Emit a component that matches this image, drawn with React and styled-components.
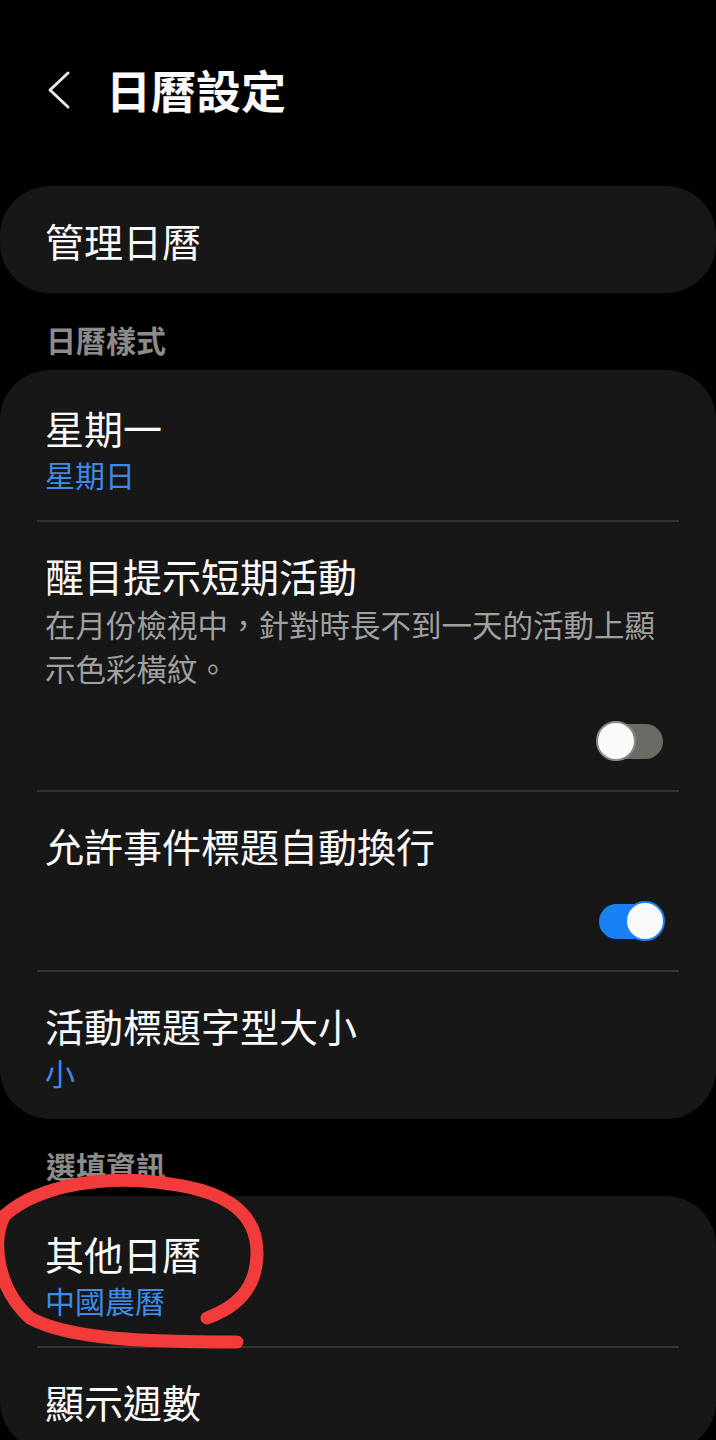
import React from 'react';
import styled, { createGlobalStyle } from 'styled-components';

const GlobalStyle = createGlobalStyle`
    body {
        margin: 0;
        background: #000;
        font-family: "Noto Sans CJK TC", "Noto Sans", sans-serif;
    }
`;

const Page = styled.div`
    position: relative;
    width: 716px;
    min-height: 1440px;
    padding-top: 60px;
    box-sizing: border-box;
    background: #000;
    color: #fafafa;
`;

const Header = styled.div`
    display: flex;
    align-items: center;
    height: 60px;
    margin-bottom: 66px;
    padding-left: 46px;
`;

const BackIcon = styled.svg`
    width: 26px;
    height: 40px;
    flex: none;
`;

const Title = styled.h1`
    margin: 0 0 0 34px;
    font-size: 45px;
    font-weight: 700;
    line-height: 60px;
    color: #fafafa;
`;

const Card = styled.div`
    background: #171717;
    border-radius: 50px;
    padding: 4px 0 1px;
`;

const SingleRow = styled.div`
    height: 107px;
    margin-top: -4px;
    margin-bottom: -1px;
    display: flex;
    align-items: center;
    padding: 0 51px 0 45px;
    font-size: 39px;
    line-height: 50px;
`;

const SectionLabel = styled.div`
    margin: 26px 0 11px;
    padding-left: 46px;
    font-size: 30px;
    font-weight: 700;
    line-height: 40px;
    color: #8b8b8b;
`;

const Item = styled.div`
    display: flex;
    flex-direction: column;
    padding: 28px 51px 24px 45px;
`;

const ItemTitle = styled.div`
    font-size: 39px;
    line-height: 50px;
    color: #fafafa;
`;

const ItemValue = styled.div`
    font-size: 30px;
    line-height: 44px;
    color: #3d8be8;
`;

const ItemDesc = styled.div`
    margin-top: 2px;
    font-size: 30.5px;
    line-height: 44px;
    color: #a0a0a0;
`;

const Divider = styled.div`
    height: 2px;
    margin: 0 37px;
    background: #333333;
`;

const ToggleRow = styled.div`
    display: flex;
    justify-content: flex-end;
    margin: 31px 0 5px;
`;

const ToggleBox = styled.div`
    position: relative;
    width: 69px;
    height: 40px;
`;

const Track = styled.div`
    position: absolute;
    left: 3px;
    right: 2px;
    top: 3px;
    height: 35px;
    border-radius: 18px;
    background: ${p => (p.$on ? '#1a80f5' : '#6b6b66')};
`;

const Thumb = styled.div`
    position: absolute;
    top: 0;
    ${p => (p.$on ? 'right: 0;' : 'left: 0;')}
    width: 40px;
    height: 40px;
    box-sizing: border-box;
    border-radius: 50%;
    background: #fafafa;
    border: 2px solid ${p => (p.$on ? '#1a80f5' : '#8a8a8a')};
`;

const Annotation = styled.svg`
    position: absolute;
    top: 0;
    left: 0;
    width: 716px;
    height: 1440px;
    pointer-events: none;
`;

const Toggle = ({ on }) => (
    <ToggleBox>
        <Track $on={on} />
        <Thumb $on={on} />
    </ToggleBox>
);

const App = () => {
    return (
        <Page>
            <GlobalStyle />
            <Header>
                <BackIcon viewBox="0 0 26 40">
                    <path d="M22 3 L4 20 L22 37" fill="none" stroke="#e8e8e8" strokeWidth="3" strokeLinecap="round" strokeLinejoin="round" />
                </BackIcon>
                <Title>日曆設定</Title>
            </Header>

            <Card>
                <SingleRow>管理日曆</SingleRow>
            </Card>

            <SectionLabel>日曆樣式</SectionLabel>
            <Card>
                <Item>
                    <ItemTitle>星期一</ItemTitle>
                    <ItemValue>星期日</ItemValue>
                </Item>
                <Divider />
                <Item>
                    <ItemTitle>醒目提示短期活動</ItemTitle>
                    <ItemDesc>在月份檢視中，針對時長不到一天的活動上顯示色彩橫紋。</ItemDesc>
                    <ToggleRow><Toggle on={false} /></ToggleRow>
                </Item>
                <Divider />
                <Item>
                    <ItemTitle>允許事件標題自動換行</ItemTitle>
                    <ToggleRow><Toggle on /></ToggleRow>
                </Item>
                <Divider />
                <Item>
                    <ItemTitle>活動標題字型大小</ItemTitle>
                    <ItemValue>小</ItemValue>
                </Item>
            </Card>

            <SectionLabel>選填資訊</SectionLabel>
            <Card>
                <Item>
                    <ItemTitle>其他日曆</ItemTitle>
                    <ItemValue>中國農曆</ItemValue>
                </Item>
                <Divider />
                <Item>
                    <ItemTitle>顯示週數</ItemTitle>
                </Item>
            </Card>

            {/* hand-drawn red mark over "其他日曆" */}
            <Annotation viewBox="0 0 716 1440">
                <path
                    d="M207 1318 C235 1308, 256 1290, 257 1255 C258 1215, 230 1192, 170 1184 C110 1174, 40 1184, 5 1215 C-10 1240, -2 1290, 30 1318 C70 1340, 150 1342, 237 1342"
                    fill="none"
                    stroke="#f23b3b"
                    strokeWidth="13"
                    strokeLinecap="round"
                    strokeLinejoin="round"
                />
            </Annotation>
        </Page>
    );
};

export default App;
